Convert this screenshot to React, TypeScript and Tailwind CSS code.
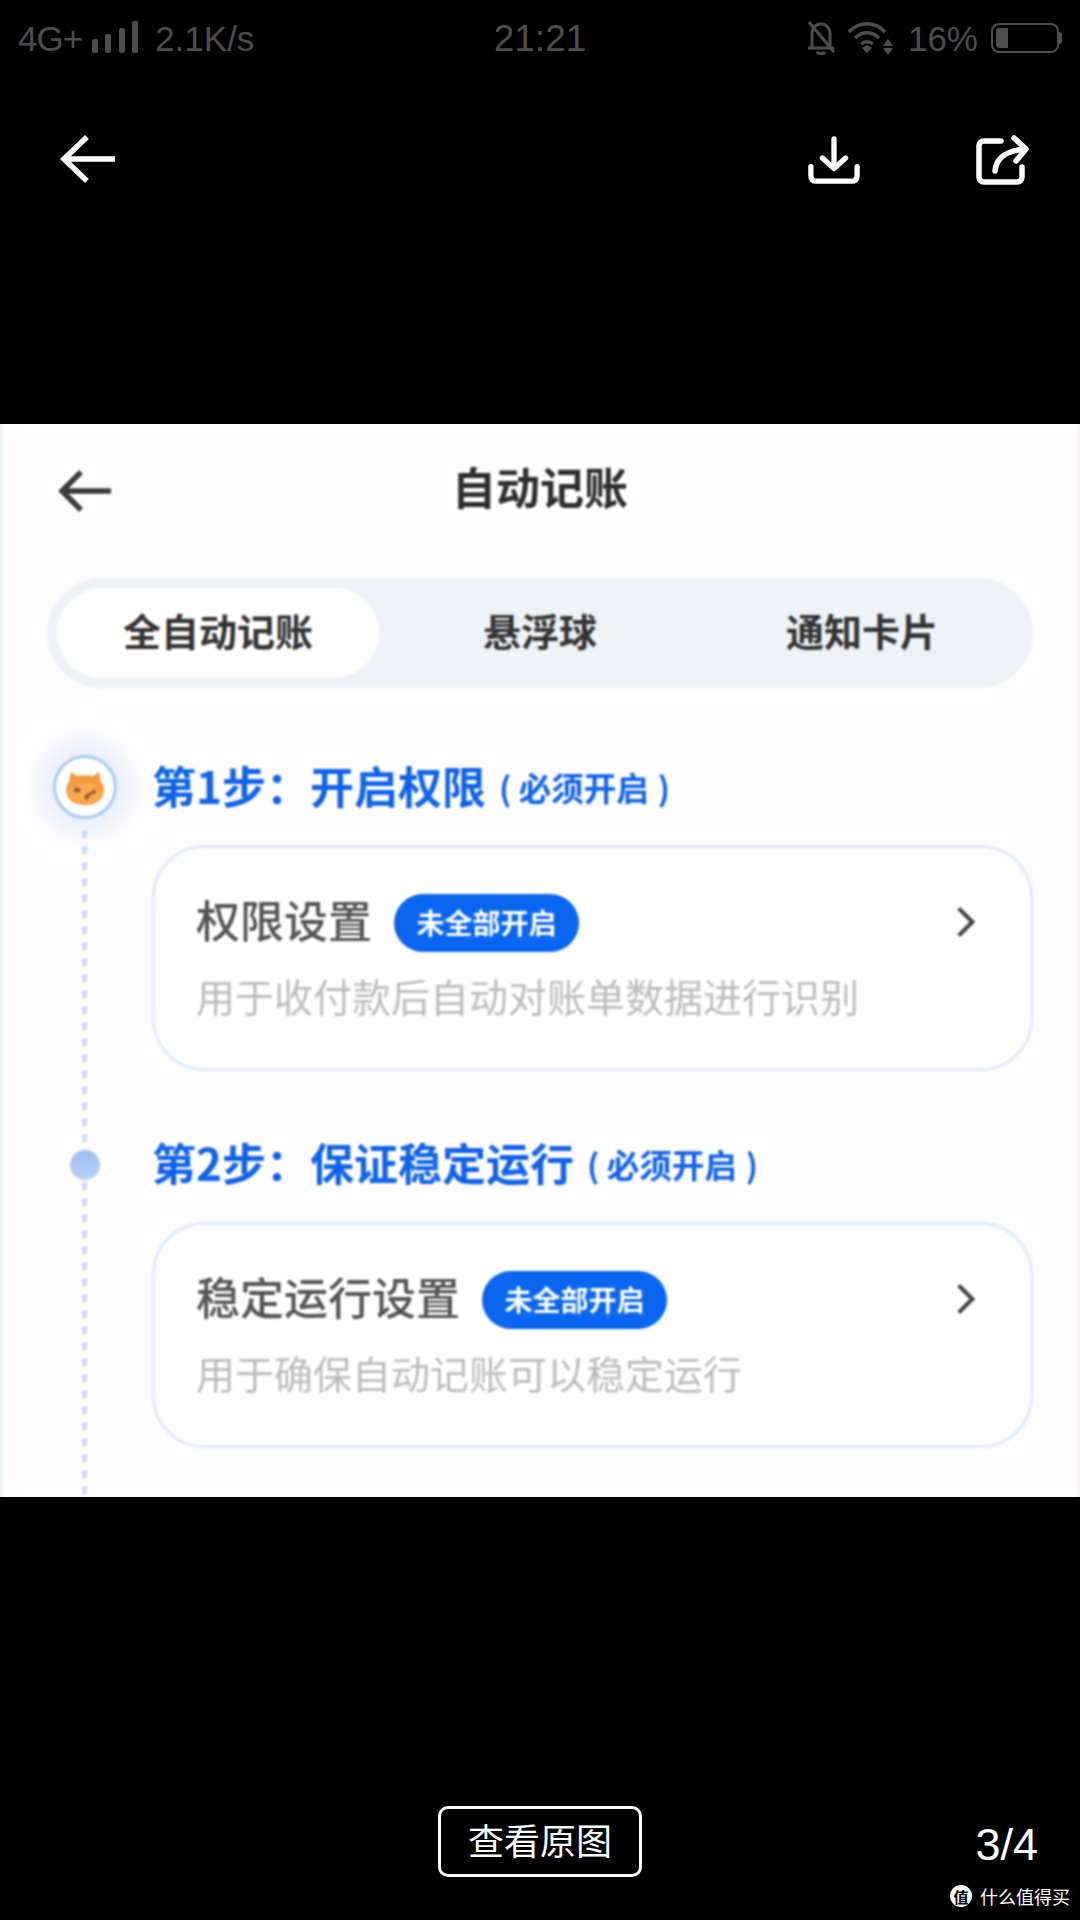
const cjk = "font-['Noto_Sans_CJK_SC','Liberation_Sans',sans-serif]"

function StatusBar() {
  return (
    <div className="grid h-[78px] grid-cols-3 items-center px-[18px] pb-[2px] font-['Liberation_Sans',sans-serif] text-[35px] leading-none text-[#4d4d4d]">
      <div className="flex items-center">
        <span className="tracking-[-1px]">4G+</span>
        <svg width="46" height="34" viewBox="0 0 46 34" className="ml-[10px]" fill="#4d4d4d">
          <rect x="0" y="18" width="6" height="14" rx="2" />
          <rect x="13" y="13" width="6" height="19" rx="2" />
          <rect x="27" y="7" width="6" height="25" rx="2" />
          <rect x="40" y="0" width="6" height="32" rx="2" />
        </svg>
        <span className="ml-[17px]">2.1K/s</span>
      </div>
      <div className="text-center text-[37px]">21:21</div>
      <div className="flex items-center justify-end">
        <svg width="30" height="36" viewBox="0 0 30 36" fill="none" stroke="#4d4d4d" strokeWidth="3">
          <path d="M6 27V14C6 8 10 4 15 4s9 4 9 10v13M2 28h26" />
          <path d="M11 32c1 2 7 2 8 0" />
          <path d="M3 2l25 30" />
        </svg>
        <svg width="46" height="34" viewBox="0 0 46 34" className="ml-[12px]" fill="none" stroke="#4d4d4d" strokeWidth="3.4">
          <path d="M1 11c10-11 26-11 36 0" />
          <path d="M7 17c7-7 17-7 24 0" />
          <path d="M13 23c4-3 8-3 12 0" />
          <path d="M14 27l5-3 5 3-5 5z" fill="#4d4d4d" stroke="none" />
          <path d="M40 18l5 7H35zM35 27h10l-5 7z" fill="#4d4d4d" stroke="none" />
        </svg>
        <span className="ml-[14px]">16%</span>
        <div className="ml-[13px] flex items-center">
          <div className="h-[30px] w-[68px] rounded-[8px] border-[2px] border-[#4d4d4d] p-[3px]">
            <div className="h-full w-[12px] rounded-l-[3px] bg-[#4d4d4d]" />
          </div>
          <div className="h-[12px] w-[3px] rounded-r-[3px] bg-[#4d4d4d]" />
        </div>
      </div>
    </div>
  )
}

function Toolbar() {
  return (
    <div className="flex h-[346px] items-start pl-[60px] pr-[50px] pt-[57px]">
      <svg width="55" height="48" viewBox="0 0 55 48" fill="none" stroke="#fff" strokeWidth="5.5">
        <path d="M55 24H4M27 2L4 24l23 22" />
      </svg>
      <svg width="52" height="50" viewBox="0 0 54 50" fill="none" stroke="#fff" strokeWidth="5.5" strokeLinecap="round" strokeLinejoin="round" className="ml-auto">
        <path d="M27 3v29M15 23l12 11 12-11" />
        <path d="M3 32v9c0 4 2 6 6 6h36c4 0 6-2 6-6v-9" />
      </svg>
      <svg width="54" height="50" viewBox="0 0 54 50" fill="none" stroke="#fff" strokeWidth="5.5" strokeLinecap="round" strokeLinejoin="round" className="ml-[116px]">
        <path d="M25 6H8C5 6 3 8 3 11v31c0 3 2 5 5 5h33c3 0 5-2 5-5V32" />
        <path d="M19 36c1-12 9-20 30-22M38 3l12 11-10 12" />
      </svg>
    </div>
  )
}

function CatAvatar() {
  return (
    <div className="flex h-[64px] w-[64px] items-center justify-center rounded-full border-[3px] border-[#a9c9f7] bg-white shadow-[0_0_26px_12px_rgba(170,200,250,0.3)]">
      <svg width="42" height="36" viewBox="0 0 42 36">
        <path d="M7 3l6 4c5-1 11-1 16 0l6-4 2 10c5 5 5 23-16 23S0 18 5 13z" fill="#f59a3c" />
        <ellipse cx="21" cy="24" rx="16" ry="10" fill="#f9a94f" />
        <ellipse cx="13" cy="21" rx="3.500" ry="2.500" fill="#9a5a26" />
        <path d="M20 27l11-7 1 4-6 2-2 5-3-1z" fill="#9a5a26" />
      </svg>
    </div>
  )
}

function Tabs() {
  return (
    <div className="mx-[44px] grid h-[110px] grid-cols-3 items-center rounded-full bg-[#eff2f7] px-[10px] text-center text-[38px] font-bold text-[#333]">
      <div className="flex h-[90px] items-center justify-center rounded-full bg-white pb-[7px]">全自动记账</div>
      <div className="pb-[7px]">悬浮球</div>
      <div className="pb-[7px]">通知卡片</div>
    </div>
  )
}

function StepTitle({ label, note }: { label: string; note: string }) {
  return (
    <div className="flex h-[64px] items-center pb-[4px] font-bold text-[#0f63ea]">
      <span className="text-[44px] leading-none">{label}</span>
      <span className="ml-[13px] mt-[5px] text-[32.5px] leading-none">
        ( {note}
        <span className="ml-[9px]">)</span>
      </span>
    </div>
  )
}

function StepCard({ title, desc }: { title: string; desc: string }) {
  return (
    <div className="mt-[26px] flex h-[226px] flex-col rounded-[52px] border-[3px] border-[#dfeaff] bg-white pl-[41px] pr-[54px] pt-[46px]">
      <div className="flex h-[58px] items-center">
        <span className="mb-[8px] text-[44px] font-medium leading-none text-[#555]">{title}</span>
        <span className="ml-[22px] flex h-[58px] w-[185px] items-center justify-center rounded-full bg-[#0a66f0] pb-[2px] text-[28px] font-bold leading-none text-white">
          未全部开启
        </span>
        <svg width="20" height="34" viewBox="0 0 22 34" fill="none" stroke="#444" strokeWidth="4.5" className="mb-[2px] ml-auto">
          <path d="M3 2l15 15L3 32" />
        </svg>
      </div>
      <div className="mt-[24px] text-[39px] leading-none text-[#bcbcbc]">{desc}</div>
    </div>
  )
}

function DottedLine({ className }: { className: string }) {
  return (
    <div className={`w-[5px] bg-[repeating-linear-gradient(to_bottom,#c6dbf9_0,#c6dbf9_8px,transparent_8px,transparent_16px)] ${className}`} />
  )
}

function Panel() {
  return (
    <div className="h-[1073px] overflow-hidden border-x-[3px] border-[#f1f4f8] bg-[#fffdfe]">
      <div className={`flex h-full flex-col blur-[1px] ${cjk}`}>
        <div className="relative flex h-[132px] items-center justify-center text-[#2e2e2e]">
          <svg width="54" height="42" viewBox="0 0 54 42" fill="none" stroke="#3a3a3a" strokeWidth="5.500" className="absolute left-[54px] top-[46px]">
            <path d="M54 21H5M24 2L5 21l19 19" />
          </svg>
          <span className="pb-[8px] text-[44px] font-bold leading-none">自动记账</span>
        </div>
        <div className="mt-[22px]">
          <Tabs />
        </div>
        <div className="ml-[44px] mr-[44px] mt-[67px] flex flex-1">
          <div className="flex w-[75px] flex-col items-center">
            <CatAvatar />
            <DottedLine className="mt-[11px] h-[318px]" />
            <div className="mt-[2px] h-[30px] w-[30px] rounded-full bg-linear-to-b from-[#9dbdf2] to-[#b9d2f8]" />
            <DottedLine className="mt-[2px] flex-1" />
          </div>
          <div className="ml-[30px] flex-1">
            <StepTitle label="第1步：开启权限" note="必须开启" />
            <StepCard title="权限设置" desc="用于收付款后自动对账单数据进行识别" />
            <div className="mt-[61px]">
              <StepTitle label="第2步：保证稳定运行" note="必须开启" />
            </div>
            <StepCard title="稳定运行设置" desc="用于确保自动记账可以稳定运行" />
          </div>
        </div>
      </div>
    </div>
  )
}

function Footer() {
  return (
    <div className="grid grid-cols-[438px_204px_1fr] pt-[309px] text-white">
      <div />
      <div className={`flex h-[71px] items-center justify-center rounded-[10px] border-[3px] border-white pb-[5px] text-[36px] leading-none ${cjk}`}>
        查看原图
      </div>
      <div className="flex flex-col items-end">
        <span className="mr-[42px] mt-[14px] font-['Liberation_Sans',sans-serif] text-[45px] leading-[50px]">3/4</span>
        <div className={`mr-[10px] mt-[15px] flex items-center text-[18px] leading-none ${cjk}`}>
          <span className="mr-[8px] flex h-[22px] w-[22px] items-center justify-center rounded-full bg-white text-[15px] font-bold text-black">值</span>
          什么值得买
        </div>
      </div>
    </div>
  )
}

export default function App() {
  return (
    <div className="h-[1920px] w-[1080px] overflow-hidden bg-black">
      <StatusBar />
      <Toolbar />
      <Panel />
      <Footer />
    </div>
  )
}
